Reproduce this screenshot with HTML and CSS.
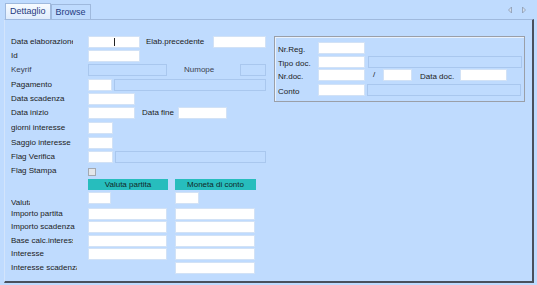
FILE: index.html
```html
<!DOCTYPE html>
<html lang="it">
<head>
    <meta charset="UTF-8">
    <title>Dettaglio</title>
    <link rel="stylesheet" href="styles.css">
</head>
<body>
    <div class="tabs">
        <div class="tab active">Dettaglio</div>
        <div class="tab">Browse</div>
        <div class="arrows">
            <svg width="20" height="8" viewBox="0 0 20 8">
                <path d="M4.5 1 L1.5 4 L4.5 7 Z" fill="#d3deec" stroke="#8d9bb0" stroke-width="0.8"/>
                <path d="M15.5 1 L18.5 4 L15.5 7 Z" fill="#d3deec" stroke="#8d9bb0" stroke-width="0.8"/>
            </svg>
        </div>
    </div>

    <div class="panel">
        <div class="form">
            <div class="row">
                <span class="lbl clip c62">Data elaborazione</span>
                <span class="fld w52 caret"></span>
                <span class="lbl ml6 lw67">Elab.precedente</span>
                <span class="fld w53"></span>
            </div>
            <div class="row">
                <span class="lbl">Id</span>
                <span class="fld w52"></span>
            </div>
            <div class="row">
                <span class="lbl off">Keyrif</span>
                <span class="fld off w79"></span>
                <span class="lbl off ml17 lw56">Numope</span>
                <span class="fld off w26"></span>
            </div>
            <div class="row">
                <span class="lbl">Pagamento</span>
                <span class="fld w24"></span>
                <span class="fld off ml2 w152"></span>
            </div>
            <div class="row">
                <span class="lbl">Data scadenza</span>
                <span class="fld w47"></span>
            </div>
            <div class="row">
                <span class="lbl">Data inizio</span>
                <span class="fld w47"></span>
                <span class="lbl ml7 lw36">Data fine</span>
                <span class="fld w49"></span>
            </div>
            <div class="row">
                <span class="lbl">giorni interesse</span>
                <span class="fld w25"></span>
            </div>
            <div class="row">
                <span class="lbl">Saggio interesse</span>
                <span class="fld w25"></span>
            </div>
            <div class="row">
                <span class="lbl">Flag Verifica</span>
                <span class="fld w25"></span>
                <span class="fld off ml2 w151"></span>
            </div>
            <div class="row">
                <span class="lbl">Flag Stampa</span>
                <span class="check"></span>
            </div>
            <div class="row">
                <span class="lbl"></span>
                <span class="head w80">Valuta partita</span>
                <span class="head ml7 w81">Moneta di conto</span>
            </div>
            <div class="row">
                <span class="lbl tiny">Valuta</span>
                <span class="fld w23"></span>
                <span class="fld ml64 w24"></span>
            </div>
            <div class="row">
                <span class="lbl">Importo partita</span>
                <span class="fld w79"></span>
                <span class="fld ml8 w80"></span>
            </div>
            <div class="row">
                <span class="lbl">Importo scadenza</span>
                <span class="fld w79"></span>
                <span class="fld ml8 w80"></span>
            </div>
            <div class="row">
                <span class="lbl clip c62">Base calc.interessi</span>
                <span class="fld w79"></span>
                <span class="fld ml8 w80"></span>
            </div>
            <div class="row">
                <span class="lbl">Interesse</span>
                <span class="fld w79"></span>
                <span class="fld ml8 w80"></span>
            </div>
            <div class="row">
                <span class="lbl clip c66">Interesse scadenza</span>
                <span class="fld ml87 w80"></span>
            </div>
        </div>

        <div class="group">
            <div class="grow">
                <span class="glbl">Nr.Reg.</span>
                <span class="fld w47"></span>
            </div>
            <div class="grow">
                <span class="glbl">Tipo doc.</span>
                <span class="fld w47"></span>
                <span class="fld off ml3 w154"></span>
            </div>
            <div class="grow">
                <span class="glbl">Nr.doc.</span>
                <span class="fld w47"></span>
                <span class="glbl slash">/</span>
                <span class="fld w29"></span>
                <span class="glbl ml8">Data doc.</span>
                <span class="fld w47"></span>
            </div>
            <div class="grow">
                <span class="glbl">Conto</span>
                <span class="fld w47"></span>
                <span class="fld off ml2 w154"></span>
            </div>
        </div>
    </div>
</body>
</html>
```

FILE: styles.css
```css
body {
    margin: 0;
    width: 537px;
    height: 285px;
    overflow: hidden;
    background-color: #bfdbfe;
    font-family: "Liberation Sans", Arial, sans-serif;
    font-size: 8px;
    color: #1c1c1c;
}

/* tab strip */
.tabs {
    display: flex;
    align-items: flex-end;
    height: 19px;
    padding-left: 5px;
}
.tab {
    height: 14px;
    line-height: 14px;
    padding: 0 4px;
    border: 1px solid #9fb9dd;
    border-bottom: none;
    font-size: 9px;
    color: #1f3a80;
}
.tab.active {
    height: 15px;
    background: linear-gradient(#f7fbff, #dfecfd);
}
.arrows {
    margin-left: auto;
    margin-right: 10px;
    align-self: center;
    display: flex;
}

/* main panel */
.panel {
    box-sizing: border-box;
    height: 264px;
    margin: 0 3px 0 4px;
    border-top: 1px solid #9fb9dd;
    border-left: 1px solid #d3e4fb;
    border-right: 2px solid #4a505c;
    border-bottom: 2px solid #4a505c;
    padding: 16px 0 0 6px;
    display: flex;
    align-items: flex-start;
    gap: 8px;
}

.form {
    width: 255px;
    display: grid;
    grid-template-rows: 14px 14px 15px 14px 14px 15px 15px 14px 14px 14px 13px 16px 13px 14px 13px 14px 12px;
}
.row {
    display: flex;
    align-items: flex-start;
}
.row > * {
    flex-shrink: 0;
}

.lbl {
    width: 77px;
    line-height: 12px;
    white-space: nowrap;
    overflow: hidden;
}
.lbl.c62 {
    width: 62px;
    margin-right: 15px;
}
.lbl.c66 {
    width: 66px;
    margin-right: 11px;
}
.lbl.tiny {
    width: 19px;
    margin-right: 58px;
    margin-top: 5px;
}
.lbl.off {
    color: #3b4250;
}
.lw36 { width: 36px; }
.lw56 { width: 56px; }
.lw67 { width: 67px; }

/* text boxes */
.fld {
    box-sizing: border-box;
    display: block;
    height: 12px;
    background-color: #fff;
    border: 1px solid #d2e2f6;
}
.fld.off {
    background-color: transparent;
    border-color: #a9c7ee;
}
.fld.caret {
    position: relative;
}
.fld.caret::after {
    content: "";
    position: absolute;
    left: 25px;
    top: 1px;
    width: 1px;
    height: 8px;
    background-color: #222;
}

.check {
    box-sizing: border-box;
    width: 8px;
    height: 8px;
    margin-top: 3px;
    background-color: #e3e6ea;
    border: 1px solid #a3a8b0;
}

.head {
    box-sizing: border-box;
    height: 11px;
    line-height: 11px;
    text-align: center;
    background-color: #27bdbd;
    color: #102828;
}

/* group box on the right */
.group {
    box-sizing: border-box;
    width: 251px;
    border: 1px solid #9a9fa8;
    box-shadow: inset 1px 1px 0 #e8f1fd;
    padding: 5px 0 5px 3px;
    display: grid;
    grid-template-rows: 14px 13px 15px 12px;
}
.grow {
    display: flex;
    align-items: flex-start;
}
.grow > * {
    flex-shrink: 0;
}
.glbl {
    width: 40px;
    line-height: 10px;
    margin-top: 3px;
    white-space: nowrap;
}
.glbl.slash {
    width: 10px;
    margin-left: 8px;
    margin-top: 1px;
}

.ml2 { margin-left: 2px; }
.ml3 { margin-left: 3px; }
.ml6 { margin-left: 6px; }
.ml7 { margin-left: 7px; }
.ml8 { margin-left: 8px; }
.ml17 { margin-left: 17px; }
.ml64 { margin-left: 64px; }
.ml87 { margin-left: 87px; }

.w23 { width: 23px; }
.w24 { width: 24px; }
.w25 { width: 25px; }
.w26 { width: 26px; }
.w29 { width: 29px; }
.w47 { width: 47px; }
.w49 { width: 49px; }
.w52 { width: 52px; }
.w53 { width: 53px; }
.w79 { width: 79px; }
.w80 { width: 80px; }
.w81 { width: 81px; }
.w151 { width: 151px; }
.w152 { width: 152px; }
.w154 { width: 154px; }
```
